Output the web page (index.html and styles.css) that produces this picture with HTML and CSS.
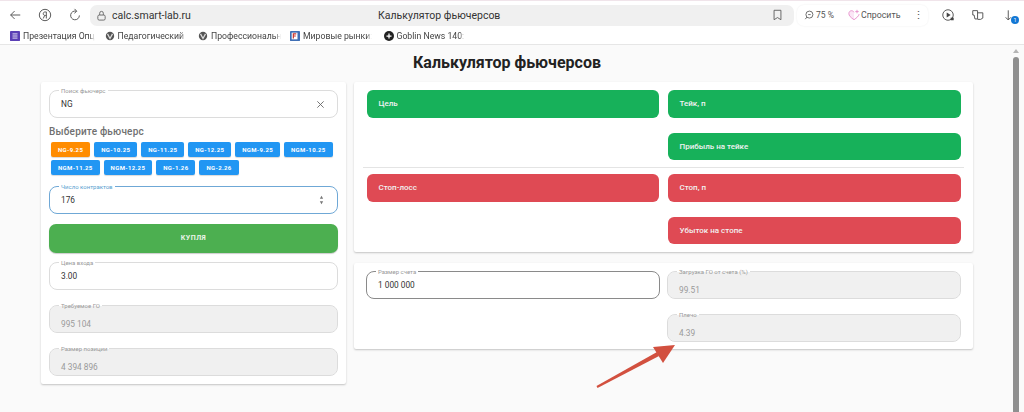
FILE: index.html
```html
<!DOCTYPE html>
<html lang="ru">
<head>
    <meta charset="UTF-8">
    <title>Калькулятор фьючерсов</title>
    <link rel="stylesheet" href="styles.css">
</head>
<body>
    <div class="toolbar">
        <svg class="tb-icon back" viewBox="0 0 16 16"><path d="M14 8H3M7.500 3.500 3 8l4.500 4.500"/></svg>
        <svg class="tb-icon ya" viewBox="0 0 16 16"><circle cx="8" cy="8" r="6.500"/><path d="M9.500 12V4.500H8.200C6.800 4.500 6 5.300 6 6.500S6.800 8.500 8.200 8.500H9.500M7.600 8.500 6 12"/></svg>
        <svg class="tb-icon reload" viewBox="0 0 16 16"><path d="M13 8.500A5 5 0 1 1 9.500 3.700M7.500 1l2.500 2.700L7.300 6"/></svg>
        <div class="address">
            <svg class="lock" viewBox="0 0 12 12"><rect x="2" y="5.500" width="8" height="5.500" rx="1.500"/><path d="M4 5.500V3.500a2 2 0 0 1 4 0v2"/></svg>
            <span class="url">calc.smart-lab.ru</span>
            <span class="page-title">Калькулятор фьючерсов</span>
            <svg class="bookmark" viewBox="0 0 12 14"><path d="M2 1.500h8v11L6 10l-4 2.500z"/></svg>
        </div>
        <div class="assistant">
            <svg class="mini" viewBox="0 0 12 12"><circle cx="6.500" cy="5.500" r="4.200"/><path d="M3.500 8.500 1.500 11M5 5.500h3"/></svg>
            <span class="zoom-value">75 %</span>
            <svg class="heart" viewBox="0 0 14 14"><path d="M7 12.500C3 9.800 1 7.800 1 5.300 1 3.400 2.400 2 4 2c1.200 0 2.200.6 3 1.800"/><path d="M7 12.500c3.300-2.300 5.500-4.200 6-6.500"/><path d="M10.500 1v4M8.500 3h4"/></svg>
            <span class="ask">Спросить</span>
            <span class="dots">⋮</span>
        </div>
        <svg class="tb-icon play" viewBox="0 0 16 16"><circle cx="8" cy="8" r="6"/><path class="solid" d="M6.500 5.200v5.600L11 8z"/><rect class="solid" x="11" y="11" width="3.500" height="3"/></svg>
        <svg class="tb-icon ext" viewBox="0 0 16 16"><path d="M2 3h5.500v9.500H4.500L3.500 8H2zM7.500 5.500h6v6L11 13H7.500"/></svg>
        <div class="download">
            <svg class="tb-icon" viewBox="0 0 16 16"><path d="M6 1.500v11M3 9.500l3 3 3-3"/></svg>
            <span class="download-badge">1</span>
        </div>
    </div>

    <div class="bookmarks">
        <div class="bm">
            <svg class="bm-icon" viewBox="0 0 12 12"><rect width="12" height="12" rx="1" fill="#5b3fb5"/><path d="M3 3.500h6M3 6h6M3 8.500h6" stroke="#fff" stroke-width="1"/></svg>
            <span class="bm-text w1">Презентация Опц</span>
        </div>
        <div class="bm">
            <svg class="bm-icon" viewBox="0 0 12 12"><circle cx="6" cy="6" r="5" fill="#555"/><path d="M3 3.500 6 9l3-5.500" stroke="#ddd" stroke-width="1.500" fill="none"/></svg>
            <span class="bm-text w2">Педагогический</span>
        </div>
        <div class="bm">
            <svg class="bm-icon" viewBox="0 0 12 12"><circle cx="6" cy="6" r="5" fill="#555"/><path d="M3 3.500 6 9l3-5.500" stroke="#ddd" stroke-width="1.500" fill="none"/></svg>
            <span class="bm-text w3">Профессиональн</span>
        </div>
        <div class="bm">
            <svg class="bm-icon" viewBox="0 0 12 12"><rect width="12" height="12" rx="1" fill="#3f6fb5"/><rect x="2" y="2" width="7" height="8" fill="#fff"/><path d="M4 9V3.500h3.500M4 6h3" stroke="#c8342c" stroke-width="1.400" fill="none"/></svg>
            <span class="bm-text w4">Мировые рынки:</span>
        </div>
        <div class="bm">
            <svg class="bm-icon" viewBox="0 0 12 12"><circle cx="6" cy="6" r="6" fill="#222"/><path d="M6 3v6M3 6h6" stroke="#fff" stroke-width="1.500"/></svg>
            <span class="bm-text w5">Goblin News 140:</span>
        </div>
    </div>

    <div class="viewport">
        <main class="page">
            <h1>Калькулятор фьючерсов</h1>
            <div class="columns">
                <section class="card left-card">
                    <fieldset class="field">
                        <legend>Поиск фьючерс</legend>
                        <span class="value">NG</span>
                        <svg class="clear" viewBox="0 0 10 10"><path d="M1.500 1.500l7 7M8.500 1.500l-7 7"/></svg>
                    </fieldset>
                    <h2>Выберите фьючерс</h2>
                    <div class="chips">
                        <span class="chip active">NG-9.25</span>
                        <span class="chip">NG-10.25</span>
                        <span class="chip">NG-11.25</span>
                        <span class="chip">NG-12.25</span>
                        <span class="chip">NGM-9.25</span>
                        <span class="chip">NGM-10.25</span>
                        <span class="chip">NGM-11.25</span>
                        <span class="chip">NGM-12.25</span>
                        <span class="chip">NG-1.26</span>
                        <span class="chip">NG-2.26</span>
                    </div>
                    <fieldset class="field focused">
                        <legend>Число контрактов</legend>
                        <span class="value">176</span>
                        <svg class="spin" viewBox="0 0 6 12"><path d="M3 1 5 4.500H1zM3 11 1 7.500h4z"/></svg>
                    </fieldset>
                    <button class="buy">КУПЛЯ</button>
                    <fieldset class="field">
                        <legend>Цена входа</legend>
                        <span class="value">3.00</span>
                    </fieldset>
                    <fieldset class="field disabled">
                        <legend>Требуемое ГО</legend>
                        <span class="value">995 104</span>
                    </fieldset>
                    <fieldset class="field disabled">
                        <legend>Размер позиции</legend>
                        <span class="value">4 394 896</span>
                    </fieldset>
                </section>

                <div class="right-col">
                    <section class="card results">
                        <div class="result-grid">
                            <div class="pill green">Цель</div>
                            <div class="pill green">Тейк, п</div>
                            <div></div>
                            <div class="pill green">Прибыль на тейке</div>
                        </div>
                        <hr class="divider">
                        <div class="result-grid">
                            <div class="pill red">Стоп-лосс</div>
                            <div class="pill red">Стоп, п</div>
                            <div></div>
                            <div class="pill red">Убыток на стопе</div>
                        </div>
                    </section>
                    <section class="card account">
                        <div class="account-grid">
                            <fieldset class="field dark">
                                <legend>Размер счета</legend>
                                <span class="value">1 000 000</span>
                            </fieldset>
                            <fieldset class="field disabled">
                                <legend>Загрузка ГО от счета (%)</legend>
                                <span class="value">99.51</span>
                            </fieldset>
                            <div></div>
                            <fieldset class="field disabled">
                                <legend>Плечо</legend>
                                <span class="value">4.39</span>
                            </fieldset>
                        </div>
                    </section>
                </div>
            </div>
        </main>
        <div class="scrollbar"><span class="scroll-up"></span><span class="scroll-thumb"></span></div>

        <!-- стрелка поверх скриншота -->
        <svg class="arrow" viewBox="0 0 90 50"><path d="M4.500 44.100 65 10 67 14 5.500 45.900z" fill="#d2503f"/><path d="M83 3 61 5 71 21z" fill="#d2503f"/></svg>
    </div>
</body>
</html>
```

FILE: styles.css
```css
* {
    box-sizing: border-box;
}

html, body {
    height: 100%;
}

body {
    margin: 0;
    font-family: Roboto, Arial, sans-serif;
    background-color: #fafafa;
    display: flex;
    flex-direction: column;
    overflow: hidden;
}

/* шапка браузера */
.toolbar {
    height: 28px;
    flex: none;
    background: #fff;
    border-top: 1px solid #f0e4ea;
    padding: 1px 0 0 8px;
    display: flex;
    align-items: center;
    color: #333;
}

.tb-icon {
    width: 14px;
    height: 14px;
    fill: none;
    stroke: #555;
    stroke-width: 1.100;
    flex: none;
}

.tb-icon .solid {
    fill: #444;
    stroke: none;
}

.back {
    margin-right: 16px;
}

.ya {
    margin-right: 16px;
}

.reload {
    margin-right: 8px;
}

.address {
    width: 704px;
    height: 21px;
    background: #f0f0f0;
    border-radius: 7px;
    display: flex;
    align-items: center;
    padding: 0 11px 0 6px;
    flex: none;
}

.lock {
    width: 11px;
    height: 11px;
    fill: none;
    stroke: #666;
    margin-right: 5px;
}

.url {
    font-size: 10.500px;
    color: #333;
    width: 80px;
    white-space: nowrap;
}

.page-title {
    font-size: 10.500px;
    color: #333;
    margin-left: 186px;
}

.bookmark {
    width: 11px;
    height: 12px;
    fill: none;
    stroke: #555;
    margin-left: auto;
}

.assistant {
    width: 131px;
    height: 21px;
    flex: none;
    margin-left: 3px;
    border-radius: 7px;
    box-shadow: 0 0 2px rgba(0, 0, 0, 0.08);
    display: flex;
    align-items: center;
    padding-left: 7px;
    font-size: 8.500px;
    color: #555;
}

.mini {
    width: 10px;
    height: 10px;
    fill: none;
    stroke: #555;
    margin-right: 2px;
}

.zoom-value {
    width: 32px;
}

.heart {
    width: 12px;
    height: 12px;
    fill: #fbe6f6;
    stroke: #e58ac9;
    margin-right: 1px;
}

.ask {
    font-size: 8.800px;
    width: 52px;
}

.dots {
    font-size: 11px;
    width: 8px;
    text-align: center;
}

.play {
    margin-left: 13px;
}

.ext {
    margin-left: 16px;
}

.download {
    margin-left: 18px;
    position: relative;
    height: 14px;
    width: 14px;
}

.download-badge {
    position: absolute;
    right: -2px;
    bottom: -2px;
    width: 8px;
    height: 8px;
    border-radius: 50%;
    background: #1277d4;
    color: #fff;
    font-size: 5.500px;
    line-height: 8px;
    text-align: center;
}

.bookmarks {
    height: 17px;
    flex: none;
    background: #fff;
    border-bottom: 1px solid #e6e6e6;
    display: flex;
    align-items: center;
    padding-left: 10px;
    font-size: 8.700px;
    color: #444;
}

.bm {
    display: flex;
    align-items: center;
    gap: 3px;
}

.bm-icon {
    width: 10px;
    height: 10px;
    flex: none;
}

.bm-text {
    white-space: nowrap;
    -webkit-mask-image: linear-gradient(to right, #000 92%, transparent);
    mask-image: linear-gradient(to right, #000 92%, transparent);
}

.w1 { width: 72px; margin-right: 9.500px; }
.w2 { width: 68px; margin-right: 12.500px; }
.w3 { width: 70px; margin-right: 9px; }
.w4 { width: 69px; margin-right: 11.500px; }
.w5 { width: 68px; }

/* страница */
.viewport {
    flex: 1;
    display: flex;
    position: relative;
    min-height: 0;
}

.page {
    flex: 1;
    padding: 0 0 0 41px;
}

h1 {
    width: 932px;
    margin: 0;
    height: 37px;
    font-size: 16px;
    line-height: 35px;
    font-weight: 700;
    text-align: center;
    color: #222;
}

.columns {
    display: flex;
    gap: 8px;
    align-items: flex-start;
}

.card {
    background: #fff;
    box-shadow: 0 1px 2px rgba(0, 0, 0, 0.22);
    border-radius: 2px;
}

.left-card {
    width: 305px;
    height: 302px;
    padding: 5px 8px 0;
}

.right-col {
    width: 619px;
    display: flex;
    flex-direction: column;
    gap: 11px;
}

.results {
    height: 170px;
    padding: 8px 13px 0;
}

.account {
    height: 86px;
    padding: 5px 13px 0 12px;
}

.result-grid {
    display: grid;
    grid-template-columns: 292px 292.500px;
    column-gap: 9px;
    row-gap: 15px;
}

.account-grid {
    display: grid;
    grid-template-columns: 294px 293.500px;
    column-gap: 7px;
    row-gap: 12px;
}

.divider {
    margin: 7px -4px 6px;
    border: 0;
    border-top: 1px solid #e4e4e4;
}

.pill {
    height: 27.500px;
    border-radius: 6px;
    color: #f2f2f2;
    font-size: 8px;
    font-weight: 500;
    line-height: 27px;
    padding-left: 11.500px;
}

.green {
    background-color: #17b15a;
}

.red {
    background-color: #df4a54;
}

/* поля с вырезом под подпись */
.field {
    margin: 0;
    padding: 0 11px;
    height: 31px;
    border: 1px solid #dcdcdc;
    border-radius: 8px;
    display: flex;
    align-items: center;
    justify-content: space-between;
    min-width: 0;
}

.field legend {
    font-size: 6px;
    line-height: 7px;
    color: #999;
    padding: 0 2px;
    margin-left: -2px;
    height: 7px;
}

.value {
    font-size: 8.300px;
    color: #333;
    display: block;
    margin-top: -3px;
}

.clear {
    width: 9px;
    height: 9px;
    fill: none;
    stroke: #666;
    stroke-width: 1;
    margin: -3px 1px 0 0;
}

.spin {
    width: 5px;
    height: 10px;
    fill: #777;
    margin: -3px 2px 0 0;
}

.focused {
    border-color: #6fa8d6;
    margin-top: 8px;
}

.focused legend {
    color: #5a9fd0;
}

.dark {
    border-color: #8a8a8a;
}

.disabled {
    background: #f0f0f0;
    background-clip: padding-box;
    margin-top: 12px;
}

.account-grid .disabled {
    margin-top: 0;
}

.disabled .value {
    color: #9a9a9a;
    margin-top: 7px;
}

h2 {
    margin: 7px 0 3px;
    font-size: 10px;
    line-height: 14px;
    font-weight: 500;
    color: #707070;
    letter-spacing: 0.200px;
}

.chips {
    display: flex;
    flex-wrap: wrap;
    gap: 3px 4px;
    padding-left: 2px;
}

.chip {
    height: 15px;
    padding: 0 7px;
    background-color: #2196f3;
    color: #fff;
    border-radius: 2px;
    font-size: 6px;
    font-weight: 700;
    line-height: 15px;
    letter-spacing: 0.350px;
    box-shadow: 0 1px 1px rgba(0, 0, 0, 0.15);
}

.chip.active {
    background-color: #ff8c00;
}

.buy {
    display: block;
    width: 100%;
    margin: 10px 0 6.500px;
    height: 28.500px;
    border: none;
    border-radius: 7px;
    background-color: #4caf50;
    color: #eaf5ea;
    font-family: inherit;
    font-size: 7px;
    font-weight: 700;
    letter-spacing: 0.500px;
    box-shadow: 0 1px 1px rgba(0, 0, 0, 0.2);
}

/* полоса прокрутки */
.scrollbar {
    width: 17px;
    flex: none;
    padding: 4px 0 0 1px;
    display: flex;
    flex-direction: column;
    align-items: center;
}

.scroll-up {
    width: 0;
    height: 0;
    border-left: 3px solid transparent;
    border-right: 3px solid transparent;
    border-bottom: 4px solid #b5b5b5;
    margin-bottom: 3.500px;
}

.scroll-thumb {
    flex: 1;
    width: 6px;
    background: #8f8f8f;
    border-radius: 3px 3px 0 0;
}

.arrow {
    position: absolute;
    left: 592px;
    top: 297px;
    width: 90px;
    height: 50px;
}
```
